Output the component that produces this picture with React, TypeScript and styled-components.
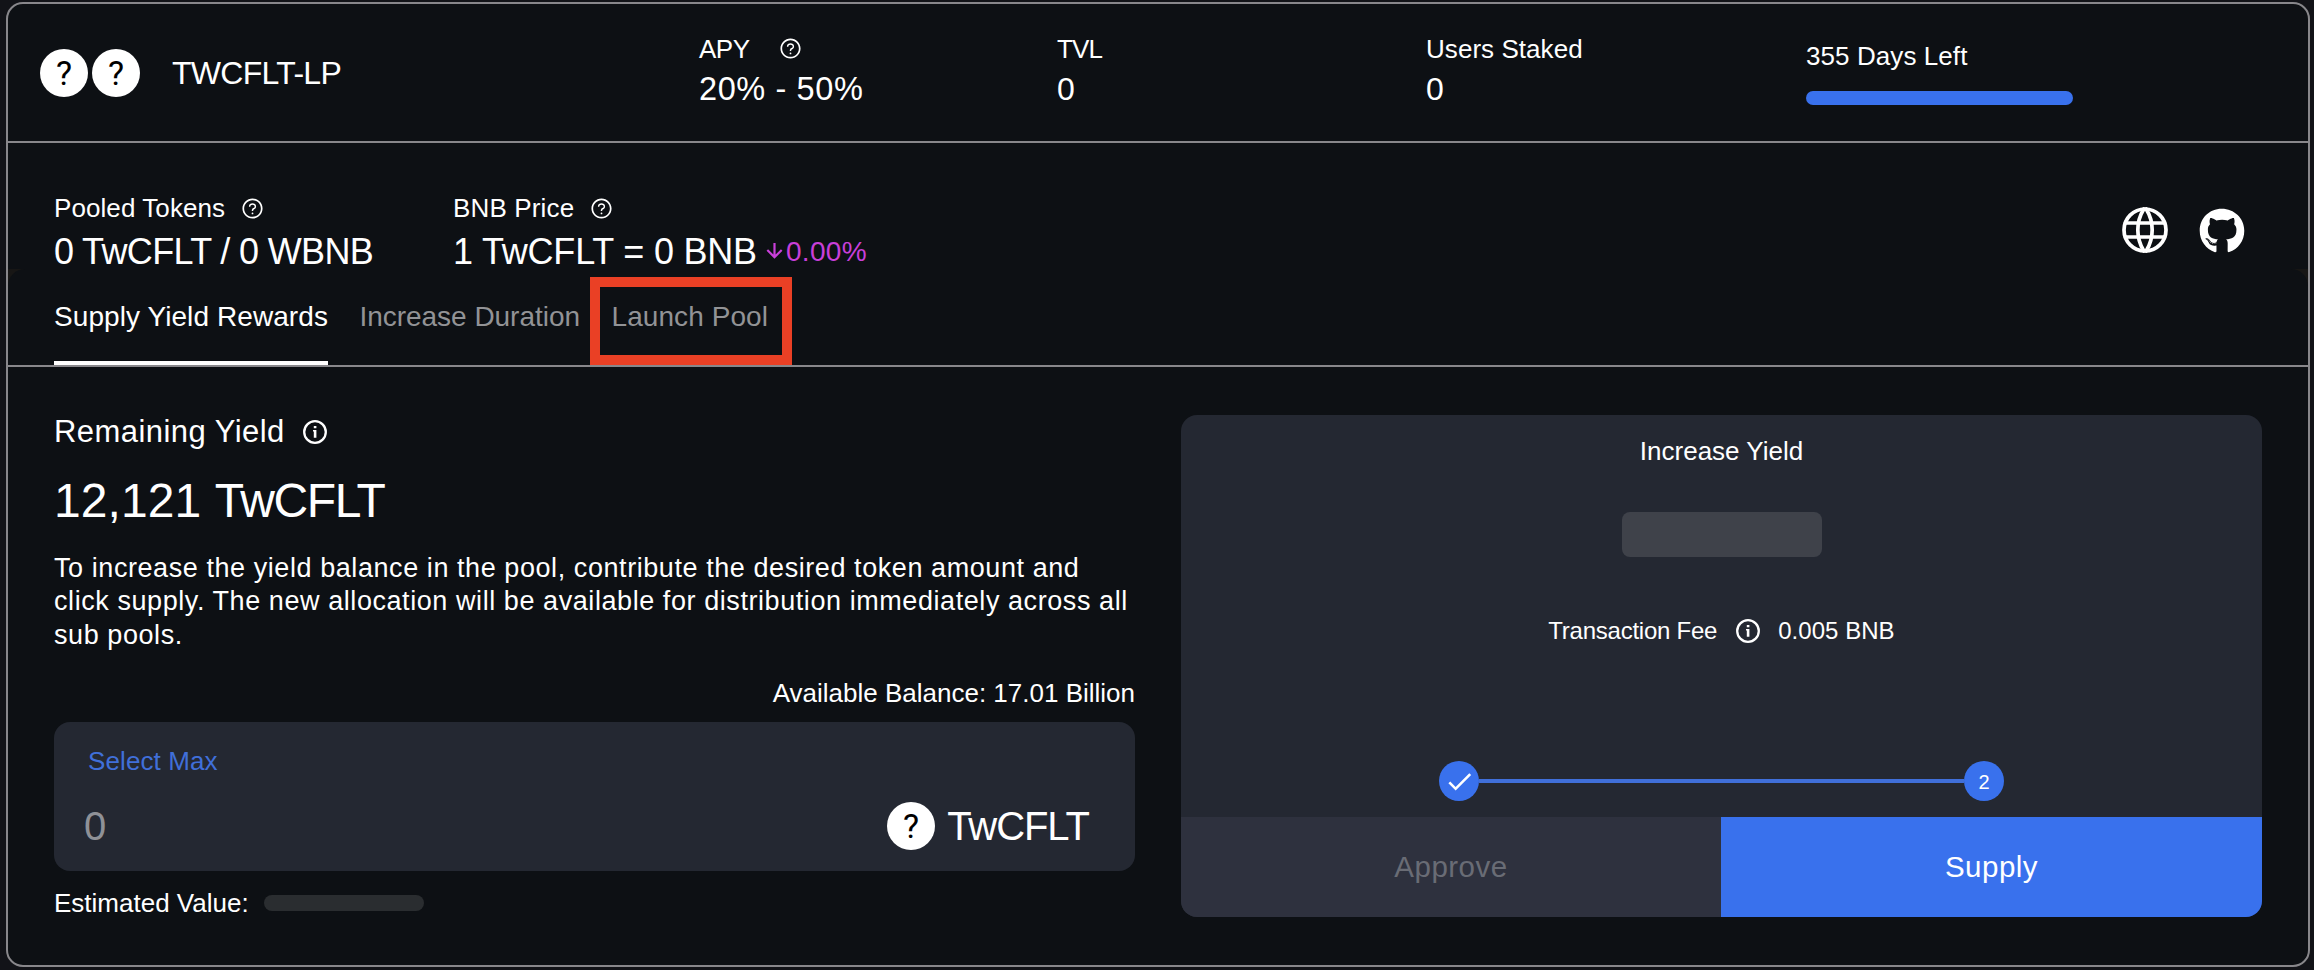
import React from "react";
import styled, { createGlobalStyle } from "styled-components";
import { AiOutlineQuestionCircle } from "react-icons/ai";
import { MdCheck } from "react-icons/md";
import { FaGithub } from "react-icons/fa";
import { TbWorld } from "react-icons/tb";

const color = {
  page: "#121318",
  card: "#0d1014",
  panel: "#242832",
  muted: "#2e313e",
  border: "#88878b",
  blue: "#3971ed",
  pink: "#c83fd9",
  highlight: "#ea4025",
};

const GlobalStyle = createGlobalStyle`
  * { box-sizing: border-box; }
  body {
    margin: 0;
    background: ${color.page};
    color: #fff;
    font-family: "Liberation Sans", Arial, sans-serif;
  }
  button { font: inherit; border: 0; cursor: pointer; }
`;

const Page = styled.div`
  height: 970px;
  padding: 2px 4px 3px 6px;
`;

const Card = styled.main`
  height: 965px;
  border: 2px solid ${color.border};
  border-radius: 17px;
  background: ${color.card};
  overflow: hidden;
  display: flex;
  flex-direction: column;
`;

const Text = styled.span<{ $size?: number; $line?: number; $spacing?: number }>`
  font-size: ${(p) => p.$size ?? 26}px;
  line-height: ${(p) => p.$line ?? 32}px;
  letter-spacing: ${(p) => p.$spacing ?? 0}px;
  white-space: nowrap;
`;

/* ---------- header ---------- */

const Header = styled.header`
  height: 139px;
  flex: none;
  display: grid;
  grid-template-columns: 659px 358px 369px 380px 1fr;
  align-items: center;
  padding-left: 32px;
  border-bottom: 2px solid ${color.border};
`;

const Pair = styled.div`
  display: flex;
  align-items: center;
`;

const TokenLogos = styled.div`
  display: flex;
  gap: 4px;
  padding-top: 1px;
  margin-right: 32px;
`;

const TokenCircle = styled.div`
  width: 48px;
  height: 48px;
  border-radius: 50%;
  background: #fff;
  color: #000;
  display: flex;
  align-items: center;
  justify-content: center;
  font: 34px/48px Roboto, sans-serif;
`;

const LabelRow = styled.div<{ $gap?: number }>`
  display: flex;
  align-items: center;
  gap: ${(p) => p.$gap ?? 16}px;

  svg { flex: none; }
`;

const Stat = styled.div`
  display: flex;
  flex-direction: column;
  gap: 4px;
  padding-bottom: 3px;

  svg { margin-bottom: 2px; }
`;

const Countdown = styled.div`
  display: flex;
  flex-direction: column;
  gap: 19.5px;
`;

const ProgressBar = styled.div`
  width: 267px;
  height: 14px;
  border-radius: 8px;
  background: ${color.blue};
`;

/* ---------- pool info and tabs ---------- */

const PoolInfo = styled.section`
  height: 126px;
  flex: none;
  display: flex;
  padding: 49px 63px 0 46px;
`;

const InfoBlock = styled.div<{ $width?: number }>`
  display: flex;
  flex-direction: column;
  gap: 5.5px;
  width: ${(p) => (p.$width ? `${p.$width}px` : "auto")};
`;

const PriceRow = styled.div`
  display: flex;
  align-items: flex-start;
`;

const PriceChange = styled.span`
  display: flex;
  align-items: baseline;
  gap: 3px;
  margin: 6px 0 0 9px;
  color: ${color.pink};
`;

const Links = styled.nav`
  display: flex;
  align-items: flex-start;
  gap: 31px;
  margin-left: auto;
  padding-top: 10px;
`;

const GlobeLink = styled.a`
  display: flex;
  width: 56px;
  height: 56px;
  margin: 0 -5px;
`;

const GithubLink = styled.a`
  display: flex;
  padding-top: 6px;
`;

const TabsBackdrop = styled.div`
  flex: none;
  background: #171615;
`;

const Tabs = styled.div`
  height: 98px;
  display: flex;
  align-items: flex-end;
  padding-left: 46px;
  border-radius: 17px 17px 0 0;
  background: ${color.card};
  border-bottom: 2px solid ${color.border};
`;

const Tab = styled.button<{ $active?: boolean; $spacing?: number }>`
  position: relative;
  height: 65px;
  margin-right: 31.5px;
  padding: 0;
  background: none;
  display: flex;
  align-items: flex-start;
  white-space: nowrap;
  font-size: 28px;
  line-height: 34px;
  letter-spacing: ${(p) => p.$spacing ?? 0}px;
  color: ${(p) => (p.$active ? "#fff" : "#929396")};
  box-shadow: ${(p) => (p.$active ? "inset 0 -4px 0 #fff" : "none")};
`;

const HighlightFrame = styled.span`
  position: absolute;
  left: -21px;
  bottom: 0;
  width: 202px;
  height: 88px;
  border: 10px solid ${color.highlight};
`;

/* ---------- body ---------- */

const Body = styled.section`
  flex: 1;
  display: grid;
  grid-template-columns: 1fr 1fr;
  gap: 46px;
  padding: 48px 46px;
`;

const SupplyColumn = styled.div`
  display: flex;
  flex-direction: column;
`;

const Amount = styled.div`
  margin-top: 24.5px;
`;

const Description = styled.p`
  margin: 23px 0 24.5px;
  font-size: 27px;
  line-height: 33.6px;
  letter-spacing: 0.57px;
  white-space: nowrap;
`;

const Balance = styled.div`
  display: flex;
  justify-content: flex-end;
  margin-bottom: 13px;
`;

const AmountBox = styled.div`
  height: 149px;
  display: flex;
  flex-direction: column;
  padding: 23px 46px 0 30px;
  border-radius: 16px;
  background: ${color.panel};
`;

const SelectMax = styled.button`
  align-self: flex-start;
  padding: 0;
  margin: 0 0 25px 4px;
  background: none;
  color: #406fd9;
  font-size: 26px;
  line-height: 32px;
  letter-spacing: 0.1px;
`;

const InputRow = styled.div`
  display: flex;
  justify-content: space-between;
`;

const Placeholder = styled(Text)`
  color: #8f9197;
`;

const Token = styled.div`
  display: flex;
  align-items: center;
  gap: 12px;
`;

const Estimated = styled.div`
  display: flex;
  align-items: center;
  gap: 15px;
  height: 26px;
  margin-top: 19.5px;
`;

const Skeleton = styled.div<{ $w: number; $h: number; $tone: string }>`
  width: ${(p) => p.$w}px;
  height: ${(p) => p.$h}px;
  border-radius: 8px;
  background: ${(p) => p.$tone};
`;

const ActionPanel = styled.div`
  display: flex;
  flex-direction: column;
  align-items: center;
  padding-top: 20px;
  border-radius: 16px;
  background: ${color.panel};
  overflow: hidden;

  ${Skeleton} { margin-top: 44.5px; }
`;

const FeeRow = styled.div`
  display: flex;
  align-items: center;
  margin-top: 59.5px;
  gap: 18.5px;
`;

const Stepper = styled.div`
  width: 565px;
  display: flex;
  align-items: center;
  margin: auto 0 16px;
`;

const Step = styled.div`
  width: 40px;
  height: 40px;
  flex: none;
  border-radius: 50%;
  background: ${color.blue};
  display: flex;
  align-items: center;
  justify-content: center;
  font-size: 20px;
  line-height: 24px;
  padding-top: 1px;
`;

const StepLine = styled.div`
  flex: 1;
  height: 4px;
  background: #406fd9;
`;

const Actions = styled.div`
  width: 100%;
  height: 100px;
  display: grid;
  grid-template-columns: 540px 1fr;
`;

const ActionButton = styled.button<{ $primary?: boolean }>`
  background: ${(p) => (p.$primary ? color.blue : color.muted)};
  color: ${(p) => (p.$primary ? "#fff" : "#696c75")};
  font-size: 29.5px;
  letter-spacing: 0.5px;
`;

const Help = () => <AiOutlineQuestionCircle size={23} />;

const Info = () => (
  <svg width="24" height="24" viewBox="0 0 24 24" fill="none">
    <circle cx="12" cy="12" r="10.8" stroke="currentColor" strokeWidth="2.3" />
    <path d="M10.8 6h2.6v2.3h-2.6zM10 10h3.4v7.7h-2.6v-6.2H10z" fill="currentColor" />
  </svg>
);

const DownArrow = () => (
  <svg width="17" height="18" viewBox="0 0 17 18" fill="none" stroke="currentColor" strokeWidth="2.2">
    <path d="M8.5 0v14M1.3 7l7.2 7.2L15.7 7" />
  </svg>
);

export default function App() {
  return (
    <Page>
      <GlobalStyle />
      <Card>
        <Header>
          <Pair>
            <TokenLogos>
              <TokenCircle>?</TokenCircle>
              <TokenCircle>?</TokenCircle>
            </TokenLogos>
            <Text $size={32} $line={40} $spacing={-0.7}>TWCFLT-LP</Text>
          </Pair>
          <Stat>
            <LabelRow $gap={29}>
              <Text $spacing={-0.5}>APY</Text>
              <Help />
            </LabelRow>
            <Text $size={32.5} $line={40} $spacing={0.6}>20% - 50%</Text>
          </Stat>
          <Stat>
            <Text $spacing={-0.9}>TVL</Text>
            <Text $size={32} $line={40}>0</Text>
          </Stat>
          <Stat>
            <Text $spacing={0.05}>Users Staked</Text>
            <Text $size={32} $line={40}>0</Text>
          </Stat>
          <Countdown>
            <Text $spacing={0.08}>355 Days Left</Text>
            <ProgressBar />
          </Countdown>
        </Header>

        <PoolInfo>
          <InfoBlock $width={399}>
            <LabelRow>
              <Text $spacing={0.08}>Pooled Tokens</Text>
              <Help />
            </LabelRow>
            <Text $size={36} $line={44} $spacing={-0.64}>0 TwCFLT / 0 WBNB</Text>
          </InfoBlock>
          <InfoBlock>
            <LabelRow>
              <Text $spacing={0.15}>BNB Price</Text>
              <Help />
            </LabelRow>
            <PriceRow>
              <Text $size={36} $line={44} $spacing={-0.2}>1 TwCFLT = 0 BNB</Text>
              <PriceChange>
                <DownArrow />
                <Text $size={28} $line={32} $spacing={0.3}>0.00%</Text>
              </PriceChange>
            </PriceRow>
          </InfoBlock>
          <Links>
            <GlobeLink>
              <TbWorld size={56} strokeWidth={1.6} />
            </GlobeLink>
            <GithubLink>
              <FaGithub size={46} />
            </GithubLink>
          </Links>
        </PoolInfo>

        <TabsBackdrop>
          <Tabs>
            <Tab $active $spacing={0.08}>Supply Yield Rewards</Tab>
            <Tab $spacing={-0.03}>Increase Duration</Tab>
            <Tab $spacing={0.08}>
              Launch Pool
              <HighlightFrame />
            </Tab>
          </Tabs>
        </TabsBackdrop>

        <Body>
          <SupplyColumn>
            <LabelRow $gap={18}>
              <Text $size={31} $line={33} $spacing={0.45}>Remaining Yield</Text>
              <Info />
            </LabelRow>
            <Amount>
              <Text $size={48} $line={56} $spacing={0.1}>12,121 </Text>
              <Text $size={48} $line={56} $spacing={-1.38}>TwCFLT</Text>
            </Amount>
            <Description>
              To increase the yield balance in the pool, contribute the desired token amount and
              <br />
              click supply. The new allocation will be available for distribution immediately across all
              <br />
              sub pools.
            </Description>
            <Balance>
              <Text>Available Balance: 17.01 Billion</Text>
            </Balance>
            <AmountBox>
              <SelectMax>Select Max</SelectMax>
              <InputRow>
                <Placeholder $size={40} $line={48}>0</Placeholder>
                <Token>
                  <TokenCircle>?</TokenCircle>
                  <Text $size={40} $line={48} $spacing={-1.05}>TwCFLT</Text>
                </Token>
              </InputRow>
            </AmountBox>
            <Estimated>
              <Text>Estimated Value:</Text>
              <Skeleton $w={160} $h={16} $tone="#2a2d30" />
            </Estimated>
          </SupplyColumn>

          <ActionPanel>
            <Text>Increase Yield</Text>
            <Skeleton $w={200} $h={45} $tone="#3f424a" />
            <FeeRow>
              <Text $size={24} $line={30} $spacing={-0.25}>Transaction Fee</Text>
              <Info />
              <Text $size={24} $line={30} $spacing={0.05}>0.005 BNB</Text>
            </FeeRow>
            <Stepper>
              <Step>
                <MdCheck size={31} />
              </Step>
              <StepLine />
              <Step>2</Step>
            </Stepper>
            <Actions>
              <ActionButton>Approve</ActionButton>
              <ActionButton $primary>Supply</ActionButton>
            </Actions>
          </ActionPanel>
        </Body>
      </Card>
    </Page>
  );
}
